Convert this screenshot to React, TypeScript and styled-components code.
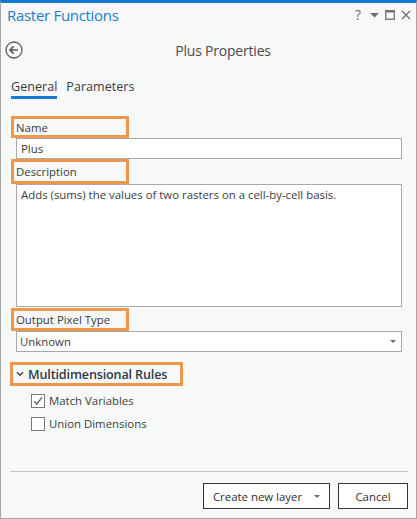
import React from "react";
import styled, { createGlobalStyle } from "styled-components";

const Global = createGlobalStyle`
  html, body { margin: 0; padding: 0; background: #ffffff; }
  body { font-family: "Open Sans", "Noto Sans", sans-serif; }
  * { box-sizing: border-box; }
`;

const ORANGE = "#ef964b";
const TEXT = "#3c3c3c";
const BODY_SIZE = "11.4px";

const Pane = styled.div`
  width: 417px;
  height: 519px;
  display: flex;
  flex-direction: column;
  background: #f7f8f8;
  border: 1px solid #a7a7a7;
  border-top: 3px solid #1479d0;
  color: ${TEXT};
  font-size: ${BODY_SIZE};
`;

const TitleBar = styled.div`
  height: 24px;
  display: flex;
  align-items: center;
  padding: 0 5px 0 6px;
`;

const PaneTitle = styled.div`
  flex: 1;
  font-size: 15px;
  letter-spacing: -0.3px;
  color: #1f7ccc;
  line-height: 1;
  margin-top: 1px;
`;

const TitleTools = styled.div`
  display: flex;
  align-items: center;
  gap: 6px;
  color: #6e6e6e;
`;

const Help = styled.span`
  font-size: 14px;
  line-height: 1;
  width: 10px;
  text-align: center;
  margin-right: 1px;
`;

const Header = styled.div`
  height: 46px;
  display: flex;
  align-items: center;
  padding: 0 0 0 4px;
`;

const BackButton = styled.div`
  width: 18px;
  height: 18px;
  display: flex;
  margin-right: 7px;
`;

const HeaderTitle = styled.div`
  flex: 1;
  text-align: center;
  font-size: 14px;
  letter-spacing: -0.2px;
  color: #4a4a4a;
`;

const Tabs = styled.div`
  display: flex;
  gap: 9px;
  padding-left: 10px;
  margin-top: 5px;
`;

const Tab = styled.div<{ $active?: boolean }>`
  font-size: 12.6px;
  color: #3a3a3a;
  padding-bottom: 1px;
  border-bottom: 3px solid ${(p) => (p.$active ? "#1479d0" : "transparent")};
  line-height: 17px;
`;

const Form = styled.div`
  display: flex;
  flex-direction: column;
  padding: 0 14px 0 10px;
  margin-top: 17px;
`;

const FieldLabel = styled.div<{ $w: number; $h: number; $gap?: number }>`
  width: ${(p) => p.$w}px;
  height: ${(p) => p.$h}px;
  margin-top: ${(p) => p.$gap ?? 0}px;
  border: 3px solid ${ORANGE};
  display: flex;
  align-items: center;
  padding-left: 2px;
  color: ${TEXT};
`;

const TextBox = styled.div<{ $h: number }>`
  margin-left: 5px;
  height: ${(p) => p.$h}px;
  background: #ffffff;
  border: 1px solid #a9a9a9;
  padding: 2px 4px;
  line-height: 15px;
  color: ${TEXT};
  display: flex;
  align-items: ${(p) => (p.$h > 30 ? "flex-start" : "center")};
`;

const SelectBox = styled(TextBox)`
  justify-content: space-between;
  padding: 0 5px 0 3px;
`;

const Caret = styled.span`
  width: 0;
  height: 0;
  border-left: 3px solid transparent;
  border-right: 3px solid transparent;
  border-top: 3px solid #6a6a6a;
`;

const GroupHeader = styled.div`
  margin-top: 10px;
  margin-left: -1px;
  width: 173px;
  height: 24px;
  border: 3px solid ${ORANGE};
  display: flex;
  align-items: center;
  gap: 4px;
  padding-left: 3px;
  font-size: 12.6px;
  letter-spacing: -0.15px;
  font-weight: 600;
  white-space: nowrap;
  color: #2f3a48;
`;

const Checks = styled.div`
  display: flex;
  flex-direction: column;
  gap: 8px;
  margin: 7px 0 0 20px;
`;

const CheckRow = styled.label`
  display: flex;
  align-items: center;
  gap: 4px;
  color: ${TEXT};
`;

const Box = styled.span`
  width: 14px;
  height: 14px;
  background: #ffffff;
  border: 1px solid #7a7a7a;
  display: flex;
  align-items: center;
  justify-content: center;
`;

const Footer = styled.div`
  margin-top: auto;
  padding: 0 8px 9px 9px;
`;

const Rule = styled.div`
  height: 1px;
  background: #c6c6c6;
  margin-bottom: 11px;
`;

const Buttons = styled.div`
  display: flex;
  justify-content: flex-end;
  gap: 8px;
`;

const Button = styled.div<{ $w: number }>`
  width: ${(p) => p.$w}px;
  height: 26px;
  border: 1px solid #333333;
  background: #ffffff;
  display: flex;
  align-items: center;
  justify-content: center;
  gap: 12px;
  color: #2e2e2e;
`;

const ArrowLeftCircle = () => (
  <svg width="18" height="18" viewBox="0 0 18 18">
    <circle cx="9" cy="9" r="8" fill="none" stroke="#5a5a5a" strokeWidth="1.3" />
    <path d="M13 9H5.2M8.6 5.4L5 9l3.6 3.6" fill="none" stroke="#5a5a5a" strokeWidth="1.6" />
  </svg>
);

const Maximize = () => (
  <svg width="10" height="10" viewBox="0 0 10 10">
    <rect x="0.75" y="0.75" width="8.5" height="8.5" fill="none" stroke="#6e6e6e" strokeWidth="1.3" />
    <rect x="0.5" y="0.5" width="9" height="2" fill="#6e6e6e" />
  </svg>
);

const Close = () => (
  <svg width="10" height="10" viewBox="0 0 10 10">
    <path d="M1 1l8 8M9 1L1 9" stroke="#6e6e6e" strokeWidth="1.3" />
  </svg>
);

const MenuCaret = () => (
  <svg width="9" height="6" viewBox="0 0 9 6">
    <path d="M0 1h9L4.5 5.5z" fill="#6e6e6e" />
  </svg>
);

const Chevron = () => (
  <svg width="8" height="6" viewBox="0 0 8 6">
    <path d="M1 1.2l3 3 3-3" fill="none" stroke="#444" strokeWidth="1.6" />
  </svg>
);

const Tick = () => (
  <svg width="12" height="12" viewBox="0 0 12 12">
    <path d="M2.2 6.2l2.6 2.8L10 2.4" fill="none" stroke="#6a6a6a" strokeWidth="1.5" />
  </svg>
);

export default function App() {
  return (
    <>
      <Global />
      <Pane>
        <TitleBar>
          <PaneTitle>Raster Functions</PaneTitle>
          <TitleTools>
            <Help>?</Help>
            <MenuCaret />
            <Maximize />
            <Close />
          </TitleTools>
        </TitleBar>
        <Header>
          <BackButton>
            <ArrowLeftCircle />
          </BackButton>
          <HeaderTitle>Plus Properties</HeaderTitle>
        </Header>
        <Tabs>
          <Tab $active>General</Tab>
          <Tab>Parameters</Tab>
        </Tabs>
        <Form>
          <FieldLabel $w={118} $h={22}>Name</FieldLabel>
          <TextBox $h={21}>Plus</TextBox>
          <FieldLabel $w={118} $h={25}>Description</FieldLabel>
          <TextBox $h={123}>
            Adds (sums) the values of two rasters on a cell-by-cell basis.
          </TextBox>
          <FieldLabel $w={118} $h={23} $gap={1}>Output Pixel Type</FieldLabel>
          <SelectBox $h={21}>
            Unknown
            <Caret />
          </SelectBox>
          <GroupHeader>
            <Chevron />
            Multidimensional Rules
          </GroupHeader>
          <Checks>
            <CheckRow>
              <Box>
                <Tick />
              </Box>
              Match Variables
            </CheckRow>
            <CheckRow>
              <Box />
              Union Dimensions
            </CheckRow>
          </Checks>
        </Form>
        <Footer>
          <Rule />
          <Buttons>
            <Button $w={127}>
              Create new layer
              <Caret />
            </Button>
            <Button $w={70}>Cancel</Button>
          </Buttons>
        </Footer>
      </Pane>
    </>
  );
}
